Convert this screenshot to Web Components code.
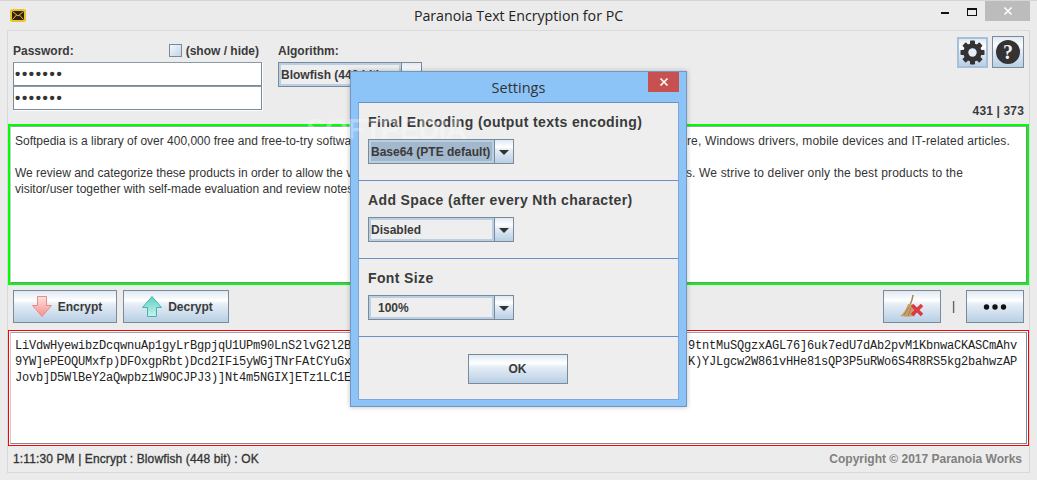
<!DOCTYPE html>
<html><head><meta charset="utf-8"><title>Paranoia Text Encryption for PC</title>
<style>
html,body{margin:0;padding:0;background:#ebebeb}
body{font:12px "Liberation Sans",Arial,sans-serif;color:#333}
</style></head>
<body>
<pte-app></pte-app>
<script>
const BTN='linear-gradient(#dfe9f3 0,#fff 30%,#e6eef6 42%,#b8cfe5 100%)';
function def(name,css,html){
  customElements.define(name,class extends HTMLElement{
    constructor(){super();const r=this.attachShadow({mode:'open'});
      r.innerHTML='<style>'+css+'</style>'+(typeof html==='function'?html(this):html);}
  });
}
def('pte-titlebar',`
:host{display:flex;height:30px;box-sizing:border-box;border-top:1px solid #d6d6d6;position:relative;align-items:flex-start}
.ico{margin:8px 0 0 10px;width:16px;height:13px;flex:none}
.t{flex:1;text-align:center;font:14.2px/29px "Open Sans","Noto Sans",sans-serif;color:#222;margin-left:-26px}
.ctl{display:flex;align-items:flex-start;position:absolute;right:7px;top:0}
.min{width:8px;height:2px;background:#111;margin:11px 18px 0 0}
.max{width:8px;height:5px;border:1px solid #111;border-top-width:2px;margin:7px 8px 0 0}
.x{width:45px;height:20px;background:#bcbcbc;display:flex;align-items:center;justify-content:center}
`,`<svg class="ico" viewBox="0 0 16 13"><rect width="16" height="13" rx="2.500" fill="#ecc22e"/><rect x="2" y="2" width="12" height="9" rx=".5" fill="#2e2208"/><path d="M2.500 2.500L8 7l5.500-4.500M2.500 10.500L6.500 6M13.500 10.500L9.500 6" stroke="#e9c44a" stroke-width="1" fill="none"/></svg>
<div class="t"><slot></slot></div>
<div class="ctl"><div class="min"></div><div class="max"></div><div class="x"><svg width="10" height="10" viewBox="0 0 10 10"><path d="M1.500 1.500l7 7M8.500 1.500l-7 7" stroke="#fff" stroke-width="1.600"/></svg></div></div>`);

def('pte-panel',`:host{display:flex;flex-direction:column;margin:0 7px;width:1021px;height:441px;border:1px solid #d9d9d9;background:#ececec}`,`<slot></slot>`);

def('pte-field',`:host{display:block;width:249px;height:24px;box-sizing:border-box;border:1px solid #7a8a99;border-top-color:#8c99a6;background:#fff;box-shadow:1px 1px 0 #fff;padding-left:1px;font:bold 15px/22px "Liberation Sans",sans-serif;letter-spacing:1.650px;color:#333;overflow:hidden;white-space:nowrap}`,`<slot></slot>`);

def('pte-check',`:host{display:inline-flex;align-items:center;font:bold 12px "Liberation Sans",sans-serif;color:#3a3a3a;gap:4px;margin-right:3px}
i{display:block;width:11px;height:11px;border:1px solid #7a8a99;background:linear-gradient(135deg,#f3f7fb,#c4d5e7)}`,`<i></i><span><slot></slot></span>`);

def('pte-combo',`:host{display:flex;box-sizing:border-box;height:25px;width:var(--w,146px);border:1px solid #7a8a99;font:bold 12px "Liberation Sans",sans-serif;color:#3a3a3a;background:#eee}
.l{flex:1;min-width:0;border:2px solid #b8cfe5;display:flex;align-items:center;padding-left:var(--pl,0);white-space:nowrap;overflow:hidden;background:var(--sel,#eee);box-sizing:border-box}
.a{width:var(--aw,18px);flex:none;border-left:1px solid #7a8a99;background:${BTN};display:flex;align-items:center;justify-content:center}
.a i{display:block;border:5px solid transparent;border-top:5px solid #333;border-bottom:0;width:0;height:0;margin-top:1px}`,
`<div class="l"><slot></slot></div><div class="a"><i></i></div>`);

def('pte-button',`:host{display:flex;box-sizing:border-box;align-items:center;justify-content:center;gap:5px;height:33px;width:var(--w,100px);padding-left:var(--pd,0);border:1px solid #7a8a99;background:${BTN};font:bold 12px "Liberation Sans",sans-serif;color:#3a3a3a;flex:none}`,`<slot name="icon"></slot><slot></slot>`);

def('pte-textbox',`:host{display:block;box-sizing:border-box;border:var(--bw,2px) solid var(--c,#0f0);background:#fff}
div{box-sizing:border-box;height:calc(100% - 2 * var(--gap,0px));margin:var(--gap,0);border:1px solid #7a8a99;border-left-color:#c4ccd4;border-top-color:#98a4b0;padding:var(--pt,5px) 4px 0 4px;overflow:hidden}`,`<div><slot></slot></div>`);

def('pte-line',`:host{display:flex;justify-content:space-between;white-space:pre;height:16px;line-height:16px}`,`<slot></slot>`);

def('pte-dialog',`:host{position:absolute;left:350px;top:71px;width:337px;height:336px;box-sizing:border-box;border:1px solid #6f97bf;background:#8cc4f8;box-shadow:0 0 5px rgba(0,0,0,.25);display:flex;flex-direction:column;padding:0 7px 6px 7px}
.h{height:30px;flex:none;text-align:center;font:14.500px/31px "Open Sans","Noto Sans",sans-serif;color:#333;position:relative}
.c{position:absolute;right:0;top:0;width:31px;height:20px;background:#c75050;display:flex;align-items:center;justify-content:center}
.b{flex:1;background:#eee;border:1px solid #7fa6d6;border-top-color:#6b8fc6;display:flex;flex-direction:column}`,
`<div class="h">Settings<div class="c"><svg width="10" height="10" viewBox="0 0 10 10"><path d="M1.500 1.500l7 7M8.500 1.500l-7 7" stroke="#fff" stroke-width="1.700"/></svg></div></div><div class="b"><slot></slot></div>`);

def('pte-section',`:host{display:block;box-sizing:border-box;height:78px;padding:9px 0 0 9px;border-bottom:1px solid #6b8fc6}
h3{margin:0 0 7px;font:bold 14px/20px "Liberation Sans",sans-serif;letter-spacing:.38px;color:#3a3a3a}`,
t=>`<h3>${t.getAttribute('heading')}</h3><slot></slot>`);

def('pte-app',`
:host{display:block;position:relative;width:1037px;height:480px;overflow:hidden;background:#ebebeb;--mono:"Liberation Mono","Courier New",monospace}
.top{height:93px;display:flex;flex:none;padding:0 5px;box-sizing:border-box}
.pw{width:249px;padding-top:12px}
.lr{display:flex;justify-content:space-between;align-items:center;height:15px;margin-bottom:4px;font-weight:bold;color:#3a3a3a}
.alg{margin-left:16px;padding-top:12px;width:144px}
.alg pte-combo{--w:144px;--aw:19px}
.rt{margin-left:auto;padding-top:5px;display:flex;flex-direction:column;align-items:flex-end}
.ib{display:flex;gap:4px;align-items:flex-start}
.g,.q{box-sizing:border-box;height:32px;display:flex;align-items:center;justify-content:center;background:${BTN}}
.g{width:31px;border:2px solid #a7c0da;margin-top:1px;height:31px}
.q{width:32px;border:1px solid #7a8a99}
.cnt{margin-top:auto;padding-bottom:6px;font-weight:bold;letter-spacing:.15px;color:#3a3a3a}
.in{height:161px;flex:none;--pt:6px;font:12px/16px "Liberation Sans",sans-serif;color:#333}
.in .r{letter-spacing:.16px}
.bar{height:44px;flex:none;display:flex;padding:5px 5px 0;box-sizing:border-box;gap:6px}
.sp{flex:1}
.sep{width:25px;text-align:center;line-height:33px;color:#334;margin:0 -6px}
.out{height:116px;margin-top:1px;flex:none;--c:#f00;--bw:1px;--gap:1px;font:12px/16px var(--mono);color:#222;--pt:5px;letter-spacing:-.2px}
.out .r{margin-right:5px}
.st{flex:1;display:flex;justify-content:space-between;align-items:center;padding:0 7px 0 5px;color:#333}
.st span{letter-spacing:.12px;-webkit-text-stroke:.3px #333}
.st em{font-style:normal;font-weight:bold;color:#808080}
.wm{position:absolute;left:306px;top:113px;font:bold 30px/32px "Liberation Sans",sans-serif;letter-spacing:-1.300px;color:rgba(255,255,255,.32);pointer-events:none;white-space:nowrap}
.ok{display:flex;justify-content:center;padding:17px 2px 0 0}
svg{display:block}
`,`
<pte-titlebar>Paranoia Text Encryption for PC</pte-titlebar>
<pte-panel>
  <div class="top">
    <div class="pw">
      <div class="lr"><span>Password:</span><pte-check>(show / hide)</pte-check></div>
      <pte-field>&#8226;&#8226;&#8226;&#8226;&#8226;&#8226;&#8226;</pte-field>
      <pte-field>&#8226;&#8226;&#8226;&#8226;&#8226;&#8226;&#8226;</pte-field>
    </div>
    <div class="alg">
      <div class="lr"><span>Algorithm:</span></div>
      <pte-combo>Blowfish (448 bit)</pte-combo>
    </div>
    <div class="rt">
      <div class="ib">
        <div class="g"><svg width="25" height="25" viewBox="0 0 25 25"><g fill="#333"><circle cx="12.500" cy="12.500" r="9.200"/>
          <rect x="10" y="0.500" width="5" height="24" rx=".8"/>
          <rect x="10" y="0.500" width="5" height="24" rx=".8" transform="rotate(45 12.500 12.500)"/>
          <rect x="10" y="0.500" width="5" height="24" rx=".8" transform="rotate(90 12.500 12.500)"/>
          <rect x="10" y="0.500" width="5" height="24" rx=".8" transform="rotate(135 12.500 12.500)"/></g>
          <circle cx="12.500" cy="12.500" r="4.200" fill="#e6eef6"/></svg></div>
        <div class="q"><svg width="26" height="26" viewBox="0 0 26 26"><circle cx="13" cy="13" r="12" fill="#333"/><text x="13" y="20" text-anchor="middle" font-family="Liberation Serif,serif" font-weight="bold" font-size="20" fill="#f2f2f2">?</text></svg></div>
      </div>
      <div class="cnt">431 | 373</div>
    </div>
  </div>
  <pte-textbox class="in">
    <pte-line><span>Softpedia is a library of over 400,000 free and free-to-try software</span><span class="r" style="margin-right:12px">software, Windows drivers, mobile devices and IT-related articles.</span></pte-line>
    <pte-line> </pte-line>
    <pte-line><span>We review and categorize these products in order to allow the visitor</span><span class="r" style="margin-right:59px">needs. We strive to deliver only the best products to the</span></pte-line>
    <pte-line>visitor/user together with self-made evaluation and review notes.</pte-line>
  </pte-textbox>
  <div class="bar">
    <pte-button style="--w:104px;--pd:3px"><svg slot="icon" width="22" height="23" viewBox="0 0 22 23"><defs><linearGradient id="p" x1="0" y1="0" x2="0" y2="1"><stop offset="0" stop-color="#fbe3e0"/><stop offset="1" stop-color="#f58f8c"/></linearGradient></defs><path d="M6.500 1.500h9v9h5L11 21.500 1.500 10.500h5z" fill="url(#p)" stroke="#ea8a86"/></svg>Encrypt</pte-button>
    <pte-button style="--w:106px;--pd:2px"><svg slot="icon" width="22" height="23" viewBox="0 0 22 23"><defs><linearGradient id="t" x1="0" y1="0" x2="0" y2="1"><stop offset="0" stop-color="#5fd0c6"/><stop offset="1" stop-color="#c8f2ee"/></linearGradient></defs><path d="M6.500 21.500h9v-9h5L11 1.500 1.500 12.500h5z" fill="url(#t)" stroke="#44b4aa"/></svg>Decrypt</pte-button>
    <div class="sp"></div>
    <pte-button style="--w:58px"><svg width="26" height="26" viewBox="0 0 26 26"><path d="M14 1c-.5 4-1.500 7-3 10" stroke="#a08358" stroke-width="1.500" fill="none"/><path d="M9 10c3 0 6 1 8 3l-1 9c-5 1-10 1-15 0 3-2 6-6 8-12z" fill="#c9a06d"/><path d="M5 21l5-8M9 22l3-8" stroke="#a67c4b"/><path d="M13 11l10 10M23 11L13 21" stroke="#dc3a42" stroke-width="3.600"/></svg></pte-button>
    <div class="sep">|</div>
    <pte-button style="--w:58px"><svg width="24" height="8" viewBox="0 0 24 8"><circle cx="3.500" cy="4" r="2.700" fill="#111"/><circle cx="12" cy="4" r="2.700" fill="#111"/><circle cx="20.500" cy="4" r="2.700" fill="#111"/></svg></pte-button>
  </div>
  <pte-textbox class="out">
    <pte-line><span>LiVdwHyewibzDcqwnuAp1gyLrBgpjqU1UPm90LnS2lvG2l2B</span><span class="r">9tntMuSQgzxAGL76]6uk7edU7dAb2pvM1KbnwaCKASCmAhv</span></pte-line>
    <pte-line><span>9YW]ePEOQUMxfp)DFOxgpRbt)Dcd2IFi5yWGjTNrFAtCYuGx</span><span class="r">K)YJLgcw2W861vHHe81sQP3P5uRWo6S4R8RS5kg2bahwzAP</span></pte-line>
    <pte-line><span>Jovb]D5WlBeY2aQwpbz1W9OCJPJ3)]Nt4m5NGIX]ETz1LC1E</span></pte-line>
  </pte-textbox>
  <div class="st"><span>1:11:30 PM | Encrypt : Blowfish (448 bit) : OK</span><em>Copyright &copy; 2017 Paranoia Works</em></div>
</pte-panel>
<pte-dialog>
  <pte-section heading="Final Encoding (output texts encoding)"><pte-combo style="--sel:#a3b8cc">Base64 (PTE default)</pte-combo></pte-section>
  <pte-section heading="Add Space (after every Nth character)"><pte-combo>Disabled</pte-combo></pte-section>
  <pte-section heading="Font Size"><pte-combo style="--pl:7px">100%</pte-combo></pte-section>
  <div class="ok"><pte-button style="--w:100px;height:30px">OK</pte-button></div>
</pte-dialog>
<div class="wm">SOFTPEDIA</div>
`);
</script>
</body></html>
